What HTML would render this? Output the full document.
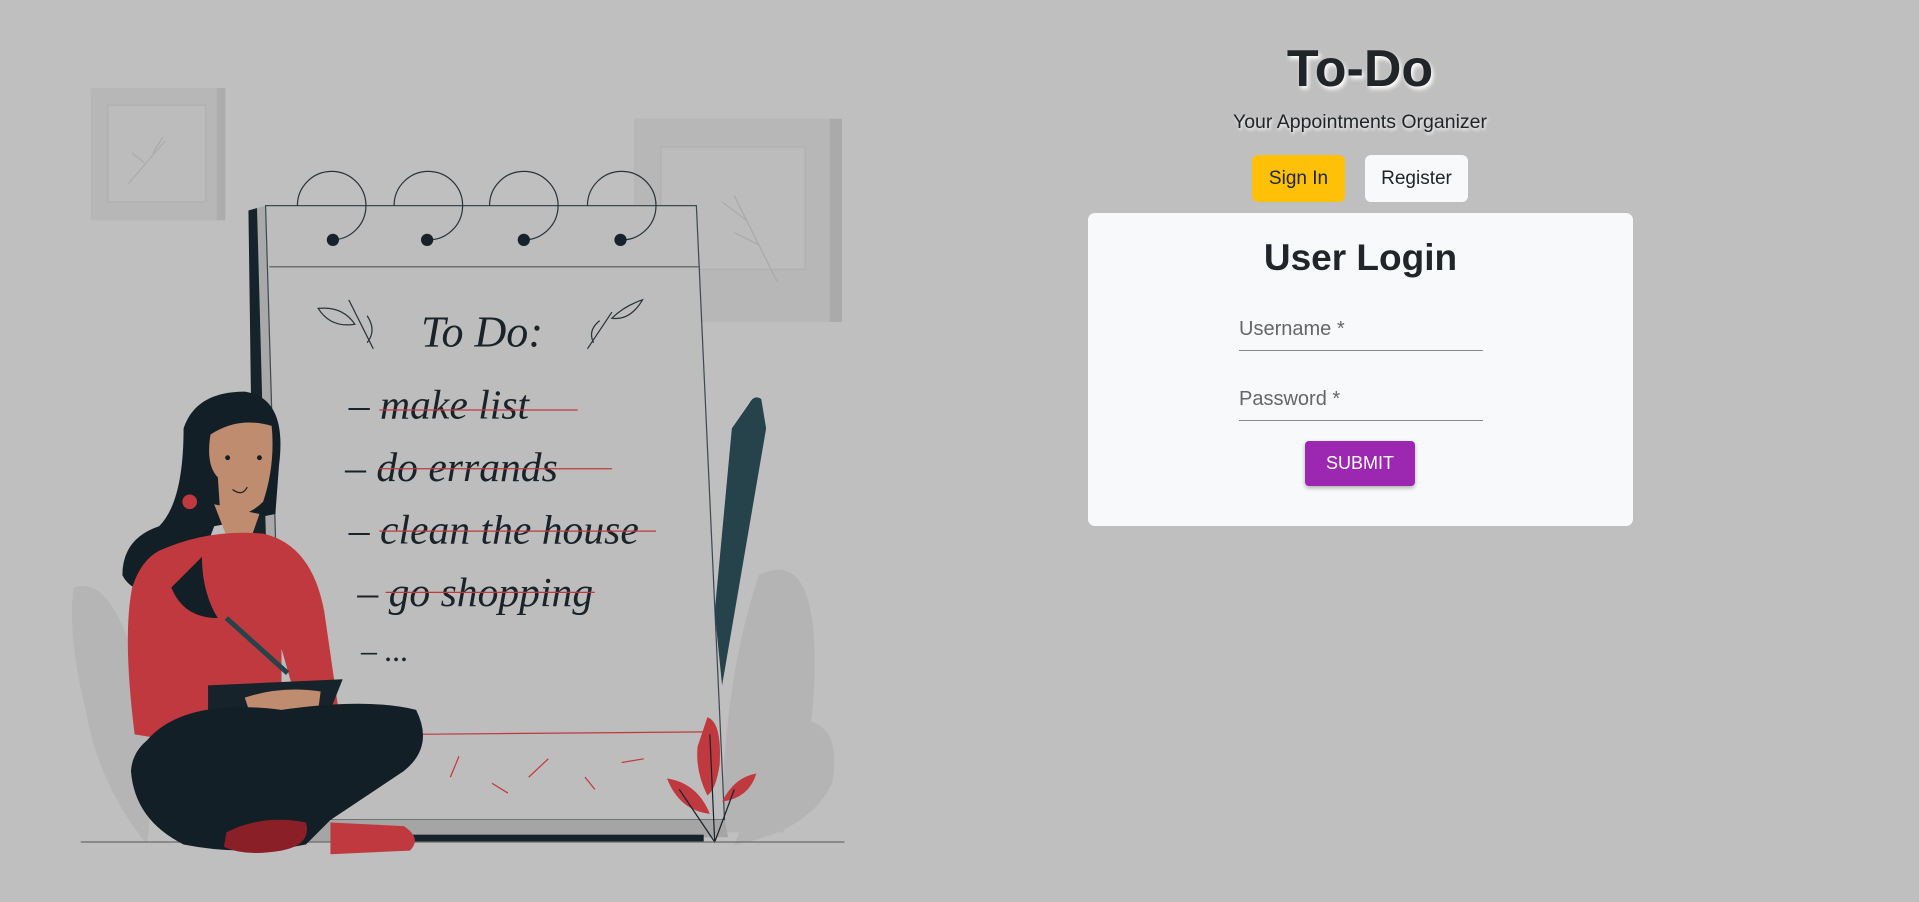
<!DOCTYPE html>
<html><head><meta charset="utf-8"><style>
html,body{margin:0;padding:0;width:1919px;height:902px;overflow:hidden;background:#bfbfbf;font-family:"Liberation Sans",sans-serif;}
svg.bg{position:absolute;left:0;top:0;width:1919px;height:902px}
.abs{position:absolute}
h1{position:absolute;left:1160px;width:400px;top:39px;margin:0;text-align:center;font-size:52px;font-weight:bold;color:#212529;text-shadow:2px 3px 4px #fff;letter-spacing:0px}
.sub{left:1110px;width:500px;top:111px;text-align:center;font-size:19.5px;color:#212529;text-shadow:1px 2px 3px #fff}
.btn{top:155px;height:47px;border-radius:6px;font-size:19px;line-height:47px;text-align:center;color:#212529}
.card{left:1088px;top:213px;width:545px;height:313px;background:#f8f9fa;border-radius:7px}
.card h2{margin:0;position:absolute;left:0;width:100%;top:24px;text-align:center;font-size:37px;font-weight:bold;color:#212529}
.lbl{left:151px;font-size:20px;color:#666}
.ul{left:151px;width:244px;height:1px;background:#8a8a8a}
.sbm{left:217px;top:228px;width:110px;height:45px;background:#9c27b0;color:#fff;border-radius:4px;font-size:18px;line-height:45px;text-align:center;box-shadow:0 2px 4px rgba(0,0,0,.3)}
</style></head><body>
<svg class="bg" viewBox="0 0 1568 737" xmlns="http://www.w3.org/2000/svg">
<rect x="74" y="72" width="110" height="108" fill="#b7b7b7"/>
<rect x="88" y="86" width="80" height="79" fill="#bcbcbc" stroke="#b0b0b0"/>
<rect x="177" y="72" width="7" height="108" fill="#adadad"/>
<path d="M105 150 L135 115 M118 133 L108 125 M125 125 L133 112" stroke="#ababab" fill="none"/>
<rect x="518" y="97" width="170" height="166" fill="#b7b7b7"/>
<rect x="540" y="120" width="118" height="100" fill="#bcbcbc" stroke="#b0b0b0"/>
<rect x="678" y="97" width="10" height="166" fill="#aaaaaa"/>
<path d="M600 160 L635 230 M610 180 L590 165 M620 200 L600 190" stroke="#aaa" fill="none"/>
<path d="M60 480 Q90 470 110 540 Q130 620 120 690 Q80 640 70 580 Q55 520 60 480Z" fill="#b5b5b5"/>
<path d="M620 470 Q660 450 665 520 Q670 600 640 680 L590 680 Q590 560 620 470Z" fill="#b4b4b4"/>
<path d="M640 590 Q690 580 680 640 Q660 680 600 690 Z" fill="#b4b4b4"/>
<polygon points="203,172 217,168 232,680 213,684" fill="#a9a9a9"/>
<polygon points="203,172 210,170 220,540 208,540" fill="#16232a"/>
<polygon points="217,168 569,168 592,670 232,670" fill="#bdbdbd" stroke="#3d4a50" stroke-width="1"/>
<polygon points="232,670 592,670 595,684 235,688" fill="#a5a5a5"/>
<rect x="330" y="682" width="245" height="6" fill="#16232a"/>
<line x1="220" y1="218" x2="572" y2="218" stroke="#555" stroke-width="1"/>
<g fill="none" stroke="#2b3439" stroke-width="1">
<path d="M243 168 A28 28 0 1 1 272 196"/><path d="M322 168 A28 28 0 1 1 349 196"/>
<path d="M400 168 A28 28 0 1 1 428 196"/><path d="M480 168 A28 28 0 1 1 507 196"/>
</g>
<g fill="#16232a"><circle cx="272" cy="196" r="5"/><circle cx="349" cy="196" r="5"/><circle cx="428" cy="196" r="5"/><circle cx="507" cy="196" r="5"/></g>
<g fill="none" stroke="#2b3439"><path d="M260 252 Q280 250 290 265 Q270 268 260 252Z M285 245 L305 285 M300 258 Q308 270 300 280"/><path d="M525 245 Q510 250 500 260 Q515 262 525 245Z M500 255 L480 285 M490 262 Q480 270 485 280"/></g>
<g font-family="'Liberation Serif',serif" font-style="italic" fill="#1a2329">
<text x="344" y="283" font-size="36">To Do:</text>
<text x="285" y="342" font-size="34">– make list</text>
<text x="282" y="393" font-size="34">– do errands</text>
<text x="285" y="444" font-size="34">– clean the house</text>
<text x="292" y="495" font-size="34">– go shopping</text>
<text x="295" y="540" font-size="26">– ...</text>
</g>
<g stroke="#c0393f" stroke-width="1"><line x1="310" y1="335" x2="472" y2="335"/><line x1="310" y1="383" x2="500" y2="383"/><line x1="310" y1="434" x2="536" y2="434"/><line x1="315" y1="484" x2="486" y2="484"/><line x1="340" y1="600" x2="576" y2="598"/>
<line x1="368" y1="635" x2="375" y2="618"/><line x1="432" y1="635" x2="448" y2="620"/><line x1="402" y1="640" x2="415" y2="648"/><line x1="478" y1="635" x2="486" y2="645"/><line x1="508" y1="623" x2="526" y2="620"/></g>
<path d="M612 330 Q616 322 622 326 L626 350 L590 560 L584 500 L598 350Z" fill="#26424a"/>
<path d="M578 586 Q590 590 588 625 Q585 645 578 650 Q568 630 570 610Z" fill="#c0393f"/>
<path d="M545 636 Q570 640 580 665 Q555 662 545 636Z" fill="#c0393f"/>
<path d="M618 632 Q600 635 590 655 Q612 652 618 632Z" fill="#c0393f"/>
<path d="M580 600 L584 688 M555 645 L584 688 L600 645" stroke="#1a2329" fill="none"/>
<line x1="66" y1="688" x2="690" y2="688" stroke="#6b6b6b"/>
<path d="M150 350 Q160 320 200 320 Q235 325 228 380 L225 420 L175 430 L160 470 Q170 500 170 505 Q150 500 145 480 Q110 490 100 470 Q100 440 130 430 Q150 410 150 350Z" fill="#131f26"/>
<path d="M172 355 Q195 340 222 348 Q225 380 215 410 Q200 425 180 420 L178 390 Q168 380 172 355Z" fill="#c08c70"/>
<path d="M175 412 L185 438 L205 440 L212 420Z" fill="#c08c70"/>
<circle cx="186" cy="374" r="2" fill="#131f26"/><circle cx="212" cy="374" r="2" fill="#131f26"/>
<path d="M190 400 Q198 406 202 398" stroke="#131f26" fill="none"/>
<circle cx="155" cy="410" r="6" fill="#c0393f"/>
<path d="M130 450 Q170 432 215 436 Q255 445 265 500 L278 590 L250 600 L230 530 L230 600 L170 610 L110 600 Q100 520 108 480 Q115 458 130 450Z" fill="#c0393f"/>
<path d="M165 455 Q165 480 175 500 L178 505 Q150 505 140 480Z" fill="#131f26"/>
<path d="M170 560 L280 555 L270 580 L170 585Z" fill="#16232a"/>
<path d="M200 570 Q230 560 262 565 L260 580 L205 585Z" fill="#c08c70"/>
<path d="M185 505 L235 550" stroke="#26424a" stroke-width="4"/>
<path d="M120 605 Q150 570 230 580 Q300 570 340 580 Q355 610 330 630 Q300 650 270 670 L250 690 Q200 700 150 690 Q110 670 107 630 Q108 615 120 605Z" fill="#131f26"/>
<path d="M185 680 Q215 665 250 672 Q255 690 230 695 Q200 700 183 692Z" fill="#8a1f27"/>
<path d="M270 672 L330 675 Q345 685 335 695 L270 698 Z" fill="#c0393f"/>
</svg>
<h1>To-Do</h1>
<div class="abs sub">Your Appointments Organizer</div>
<div class="abs btn" style="left:1252px;width:93px;background:#ffc107">Sign In</div>
<div class="abs btn" style="left:1365px;width:103px;background:#f8f9fa">Register</div>
<div class="abs card">
<h2>User Login</h2>
<div class="abs lbl" style="top:105px">Username *</div>
<div class="abs ul" style="top:137px"></div>
<div class="abs lbl" style="top:175px">Password *</div>
<div class="abs ul" style="top:207px"></div>
<div class="abs sbm">SUBMIT</div>
</div>
</body></html>
